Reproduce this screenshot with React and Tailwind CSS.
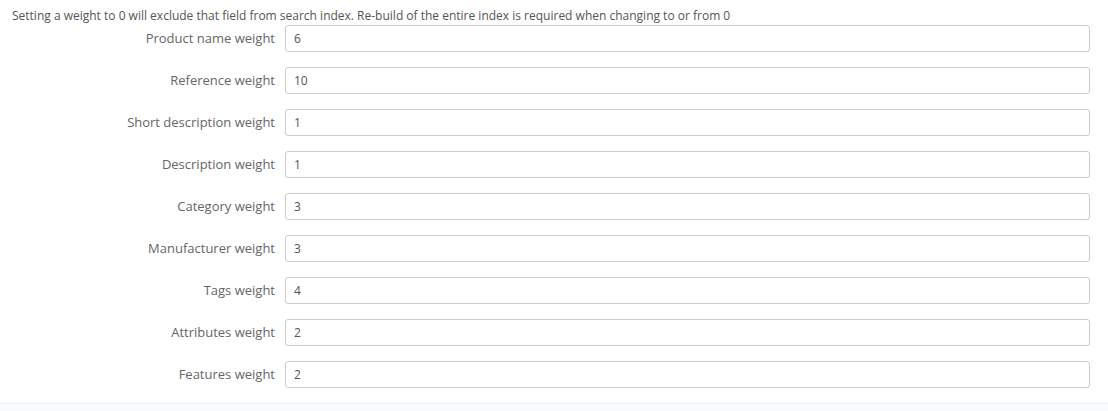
export default function App() {
  const rows = [
    ["Product name weight", "6"],
    ["Reference weight", "10"],
    ["Short description weight", "1"],
    ["Description weight", "1"],
    ["Category weight", "3"],
    ["Manufacturer weight", "3"],
    ["Tags weight", "4"],
    ["Attributes weight", "2"],
    ["Features weight", "2"],
  ];
  return (
    <div className="w-[1108px] h-[411px] bg-[#fafbfc] flex flex-col" style={{ fontFamily: '"Open Sans", sans-serif' }}>
      <div className="bg-white border-b border-[#eaedef] pb-[15px]">
        <div className="px-[12px] pt-[7px] text-[12px] leading-[18px] text-[#555]">
          Setting a weight to 0 will exclude that field from search index. Re-build of the entire index is required when changing to or from 0
        </div>
        <div className="flex flex-col gap-[15px]">
          {rows.map(([label, value]) => (
            <div key={label} className="flex items-center h-[27px]">
              <div className="w-[285px] pr-[10px] text-right text-[13px] text-[#666]">{label}</div>
              <div className="w-[805px] h-[27px] border border-[#cccccc] rounded-[3px] bg-white flex items-center px-[8px] text-[12px] text-[#555]">
                {value}
              </div>
            </div>
          ))}
        </div>
      </div>
    </div>
  );
}
